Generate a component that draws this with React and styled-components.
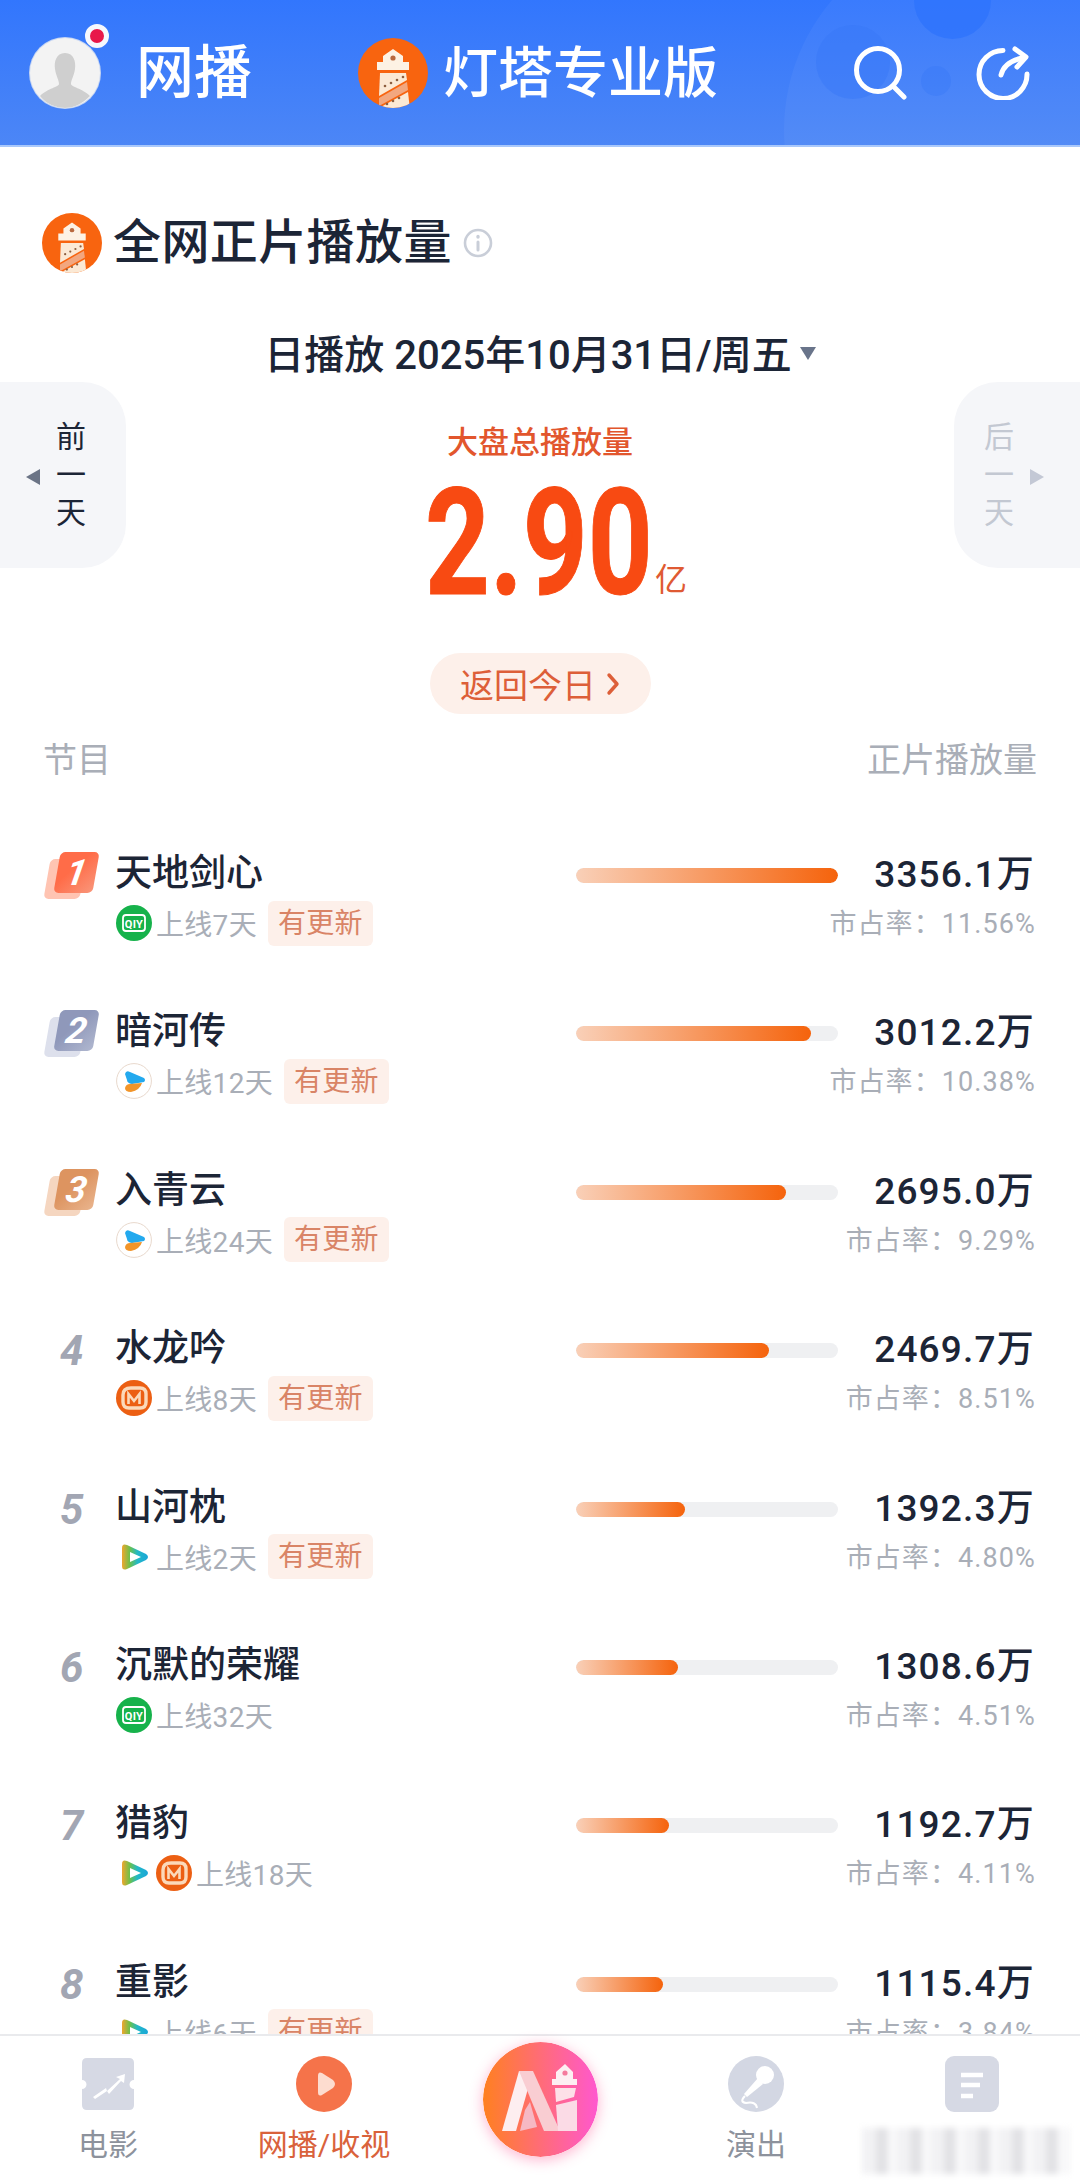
import React from 'react';
import styled, { createGlobalStyle } from 'styled-components';

const GlobalStyle = createGlobalStyle`
  html, body { margin: 0; padding: 0; background: #fff; }
  body { font-family: Roboto, "Noto Sans CJK SC", sans-serif; }
`;

const MAX_PLAY = 3356.1;

const shows = [
  { rank: 1, name: '天地剑心', platforms: ['iqiyi'], days: 7, fresh: true, plays: 3356.1, share: '11.56%' },
  { rank: 2, name: '暗河传', platforms: ['youku'], days: 12, fresh: true, plays: 3012.2, share: '10.38%' },
  { rank: 3, name: '入青云', platforms: ['youku'], days: 24, fresh: true, plays: 2695.0, share: '9.29%' },
  { rank: 4, name: '水龙吟', platforms: ['mgtv'], days: 8, fresh: true, plays: 2469.7, share: '8.51%' },
  { rank: 5, name: '山河枕', platforms: ['tencent'], days: 2, fresh: true, plays: 1392.3, share: '4.80%' },
  { rank: 6, name: '沉默的荣耀', platforms: ['iqiyi'], days: 32, fresh: false, plays: 1308.6, share: '4.51%' },
  { rank: 7, name: '猎豹', platforms: ['tencent', 'mgtv'], days: 18, fresh: false, plays: 1192.7, share: '4.11%' },
  { rank: 8, name: '重影', platforms: ['tencent'], days: 6, fresh: true, plays: 1115.4, share: '3.84%' },
];

const badgeColors = {
  1: ['#ffc4b2', '#ff6c48', '#f9967a'],
  2: ['#dde0ec', '#8f98ba', '#b0b7cf'],
  3: ['#f5d6c0', '#dd9460', '#e9b48d'],
};

const Page = styled.div`
  width: 1080px;
  height: 2184px;
  display: flex;
  flex-direction: column;
  overflow: hidden;
  background: #fff;
  color: #1c2536;
`;

const Header = styled.header`
  position: relative;
  flex: none;
  height: 147px;
  padding: 0 50px 0 30px;
  box-sizing: border-box;
  display: flex;
  align-items: center;
  overflow: hidden;
  background: linear-gradient(180deg, #3276fd 0%, #4c86f6 100%);
  border-bottom: 2px solid #a9c8fb;
`;

const HeaderBlob = styled.div`
  position: absolute;
  left: ${p => p.$x}px;
  top: ${p => p.$y}px;
  width: ${p => p.$d}px;
  height: ${p => p.$d}px;
  border-radius: 50%;
  background: ${p => p.$color};
`;

const AvatarWrap = styled.div`
  position: relative;
  width: 70px;
  height: 70px;
  flex: none;
`;

const Avatar = styled.div`
  width: 70px;
  height: 70px;
  border-radius: 50%;
  overflow: hidden;
  background: #f3f3f3;
  box-shadow: 0 0 0 1px #c7d6f2;
`;

const RedDot = styled.span`
  position: absolute;
  left: 55px;
  top: -14px;
  width: 14px;
  height: 14px;
  border-radius: 50%;
  background: #e8184a;
  border: 5px solid #f6f8fd;
`;

const Channel = styled.div`
  position: relative;
  margin-left: 36px;
  width: 222px;
  font-size: 58px;
  line-height: 70px;
  color: #fff;
  font-weight: 500;
  flex: none;
`;

const Brand = styled.div`
  position: relative;
  display: flex;
  align-items: center;
  gap: 15px;
  flex: none;
`;

const BrandName = styled.span`
  font-size: 55px;
  line-height: 70px;
  color: #fff;
  font-weight: 500;
`;

const HeaderIcons = styled.div`
  position: relative;
  margin-left: auto;
  display: flex;
  align-items: center;
  gap: 68px;
`;

const Main = styled.main`
  flex: 1;
  min-height: 0;
  overflow: hidden;
`;

const TitleRow = styled.div`
  display: flex;
  align-items: center;
  padding: 66px 42px 0;
  height: 60px;
`;

const Title = styled.h1`
  margin: 0 11px 0 11px;
  font-size: 48px;
  line-height: 60px;
  font-weight: 500;
  letter-spacing: 0.4px;
  white-space: nowrap;
`;

const DateRow = styled.div`
  margin-top: 56px;
  display: flex;
  justify-content: center;
  align-items: center;
  gap: 8px;
  height: 46px;
  font-size: 40px;
  font-weight: 500;
`;

const DateCaret = styled.span`
  width: 0;
  height: 0;
  margin-top: 2px;
  border-left: 8px solid transparent;
  border-right: 8px solid transparent;
  border-top: 13px solid #69748a;
`;

const Hero = styled.section`
  margin-top: 7px;
  display: flex;
  justify-content: space-between;
  align-items: flex-start;
`;

const DayButton = styled.div`
  width: 126px;
  height: 186px;
  box-sizing: border-box;
  display: flex;
  flex-direction: ${p => (p.$next ? 'row-reverse' : 'row')};
  align-items: center;
  justify-content: flex-start;
  padding: ${p => (p.$next ? '0 36px 0 0' : '0 0 0 26px')};
  background: #f5f6f9;
  border-radius: ${p => (p.$next ? '44px 0 0 44px' : '0 44px 44px 0')};
  color: ${p => (p.$next ? '#c3c8d2' : '#1c2536')};
`;

const DayArrow = styled.span`
  width: 0;
  height: 0;
  margin-top: 4px;
  border-top: 8px solid transparent;
  border-bottom: 8px solid transparent;
  ${p => (p.$next
    ? 'border-left: 14px solid #c3c8d5;'
    : 'border-right: 14px solid #6b7486;')}
`;

const DayText = styled.div`
  display: flex;
  flex-direction: column;
  align-items: center;
  margin: ${p => (p.$next ? '0 16px 0 0' : '0 0 0 16px')};
  font-size: 30px;
  line-height: 38px;
`;

const Total = styled.div`
  display: flex;
  flex-direction: column;
  align-items: center;
  padding-top: 40px;
`;

const TotalLabel = styled.div`
  font-size: 31px;
  line-height: 42px;
  font-weight: 500;
  color: #e2562d;
`;

const TotalValue = styled.div`
  position: relative;
  width: 222px;
  height: 140px;
  margin-top: 10px;
  margin-left: -8px;
`;

const TotalNumber = styled.span`
  position: absolute;
  left: 0;
  top: 0;
  font-size: 148px;
  line-height: 140px;
  font-weight: 700;
  color: #f84a12;
  transform: scaleX(0.765);
  transform-origin: left center;
  -webkit-text-stroke: 1px #f84a12;
  white-space: nowrap;
`;

const TotalUnit = styled.span`
  position: absolute;
  left: 230px;
  top: 86px;
  font-size: 32px;
  line-height: 40px;
  color: #df5a33;
  white-space: nowrap;
`;

const BackRow = styled.div`
  margin-top: 39px;
  display: flex;
  justify-content: center;
`;

const BackPill = styled.div`
  width: 221px;
  height: 61px;
  display: flex;
  align-items: center;
  justify-content: center;
  gap: 10px;
  border-radius: 31px;
  background: #fdf0ea;
  color: #dd5f39;
  font-size: 34px;
`;

const ListHead = styled.div`
  margin-top: 24px;
  padding: 0 43px;
  display: flex;
  justify-content: space-between;
  font-size: 34px;
  line-height: 44px;
  color: #a9aeb7;
`;

const List = styled.div`
  margin-top: 51px;
`;

const Row = styled.article`
  height: 158.4px;
  box-sizing: border-box;
  padding: 0 44px;
  display: flex;
  align-items: flex-start;
`;

const Rank = styled.div`
  position: relative;
  width: 72px;
  height: 50px;
  flex: none;
  margin-top: 18px;
`;

const BadgeBack = styled.span`
  position: absolute;
  left: 3px;
  top: 8px;
  width: 36px;
  height: 40px;
  border-radius: 5px;
  transform: skewX(-10deg);
  background: ${p => p.$color};
`;

const BadgeFront = styled.span`
  position: absolute;
  left: 13px;
  top: 1px;
  width: 39px;
  height: 41px;
  border-radius: 5px;
  transform: skewX(-10deg);
  background: linear-gradient(135deg, ${p => p.$color} 40%, ${p => p.$end} 100%);
  display: flex;
  align-items: center;
  justify-content: center;
  color: #fff;
  font-size: 36px;
  font-weight: 700;
  font-style: italic;
`;

const RankPlain = styled.span`
  position: absolute;
  left: 16px;
  top: 0;
  font-size: 42px;
  line-height: 50px;
  font-weight: 700;
  font-style: italic;
  color: #a2a6b3;
`;

const ShowInfo = styled.div`
  flex: 1;
  min-width: 0;
  display: flex;
  flex-direction: column;
`;

const ShowName = styled.div`
  margin-top: 19px;
  font-size: 37px;
  line-height: 44px;
  font-weight: 500;
  margin-left: -1px;
`;

const MetaRow = styled.div`
  margin-top: 4px;
  display: flex;
  align-items: center;
  height: 46px;
  color: #a9aeb7;
  font-size: 28px;
  letter-spacing: 0.3px;
`;

const PlatformIcon = styled.svg`
  width: 36px;
  height: 36px;
  flex: none;
  margin-right: 4px;
`;

const Fresh = styled.span`
  margin-left: 11px;
  padding: 0 10px;
  height: 45px;
  line-height: 45px;
  border-radius: 6px;
  background: #fdf0ea;
  color: #d98466;
  font-size: 28px;
`;

const BarTrack = styled.div`
  flex: none;
  width: 262px;
  height: 15px;
  margin-top: 35px;
  border-radius: 8px;
  background: #eff0f2;
  overflow: hidden;
`;

const BarFill = styled.div`
  height: 100%;
  border-radius: 8px;
  background: linear-gradient(90deg, #f9d0b8 0%, #f5630c 100%);
`;

const Stats = styled.div`
  flex: none;
  width: 198px;
  display: flex;
  flex-direction: column;
  align-items: flex-end;
`;

const Plays = styled.div`
  margin-top: 20px;
  margin-right: 1px;
  font-size: 37px;
  line-height: 44px;
  font-weight: 500;
  letter-spacing: 1.2px;
  white-space: nowrap;
`;

const Share = styled.div`
  margin-top: 4px;
  font-size: 27px;
  line-height: 46px;
  color: #a9aeb7;
  letter-spacing: 1.1px;
  white-space: nowrap;
`;

const TabBar = styled.nav`
  position: relative;
  flex: none;
  height: 150px;
  box-sizing: border-box;
  border-top: 2px solid #e9eaed;
  background: #fff;
  display: grid;
  grid-template-columns: repeat(5, 216px);
`;

const Tab = styled.div`
  display: flex;
  flex-direction: column;
  align-items: center;
  padding-top: 20px;
  font-size: 30px;
  line-height: 36px;
  color: ${p => (p.$active ? '#d9623b' : '#8d929c')};
  svg { width: 56px; height: 56px; margin-bottom: 15px; }
`;

const AiButton = styled.div`
  display: flex;
  justify-content: center;
  padding-top: 6px;
  svg {
    width: 115px;
    height: 115px;
    border-radius: 50%;
    box-shadow: 0 3px 14px rgba(255, 90, 150, 0.45);
  }
`;

const BlurredLabel = styled.div`
  position: absolute;
  left: 862px;
  top: 92px;
  width: 207px;
  height: 46px;
  filter: blur(3px);
  background: repeating-linear-gradient(90deg, #f2f2f4 0 14px, #e2e2e5 14px 26px, #fafafb 26px 34px);
`;

const LighthouseLogo = ({ size }) => (
  <svg width={size} height={size} viewBox="0 0 70 70">
    <defs>
      <clipPath id={`lh-${size}`}><circle cx="35" cy="35" r="35" /></clipPath>
    </defs>
    <circle cx="35" cy="35" r="35" fill="#f8640f" />
    <g clipPath={`url(#lh-${size})`}>
      <path d="M35 11 L45 18 V24 H51 V32 H19 V24 H25 V18 Z" fill="#fdf2e4" />
      <circle cx="35" cy="20" r="2.6" fill="#b9693f" />
      <path d="M22 35 H48 L49 42 L21 58 Z" fill="#fbe9d5" />
      <path d="M21 60 L49 44 L50 52 L21 68 Z" fill="#f2a77f" />
      <path d="M21 70 L50 54 L52 72 H21 Z" fill="#fbe9d5" />
      <circle cx="27" cy="48" r="1.3" fill="#8d5f40" />
      <circle cx="33" cy="45" r="1.3" fill="#8d5f40" />
      <circle cx="39" cy="42" r="1.3" fill="#8d5f40" />
      <circle cx="45" cy="39" r="1.3" fill="#8d5f40" />
      <circle cx="29" cy="66" r="1.3" fill="#8d5f40" />
      <circle cx="35" cy="63" r="1.3" fill="#8d5f40" />
      <circle cx="41" cy="60" r="1.3" fill="#8d5f40" />
    </g>
  </svg>
);

const Platform = ({ type }) => {
  if (type === 'iqiyi') {
    return (
      <PlatformIcon viewBox="0 0 36 36">
        <circle cx="18" cy="18" r="18" fill="#16b24b" />
        <rect x="7" y="10" width="22" height="16" rx="3" fill="none" stroke="#fff" strokeWidth="1.8" />
        <text x="18" y="22.5" textAnchor="middle" fontSize="11" fontWeight="700" fill="#fff" fontFamily="Roboto, sans-serif">QIY</text>
      </PlatformIcon>
    );
  }
  if (type === 'youku') {
    return (
      <PlatformIcon viewBox="0 0 36 36">
        <circle cx="18" cy="18" r="17.4" fill="#fff" stroke="#e8d8cc" strokeWidth="1" />
        <path d="M9 11 Q10 7 14 9 L28 15 Q30 17 28 19 L16 21 Q11 20 11 17 Z" fill="#23a9ee" />
        <path d="M9 25 Q10 21 14 21 L26 20 Q24 27 15 29 Q9 29 9 25 Z" fill="#f2952a" />
      </PlatformIcon>
    );
  }
  if (type === 'mgtv') {
    return (
      <PlatformIcon viewBox="0 0 36 36">
        <circle cx="18" cy="18" r="18" fill="#ec5f13" />
        <path d="M15 8 H24 Q30 8 30 14 V22 Q30 28 24 28 H13 Q7 28 7 22 V15 Q7 8 15 8 Z" fill="none" stroke="#fbd9ba" strokeWidth="3.4" />
        <path d="M12.5 24 V14 L18 21 L23.5 14 V24" fill="none" stroke="#fbd9ba" strokeWidth="2.6" />
      </PlatformIcon>
    );
  }
  return (
    <PlatformIcon viewBox="0 0 36 36">
      <defs>
        <linearGradient id="tencentGrad" x1="0" x2="1" y1="0" y2="0">
          <stop offset="0" stopColor="#f0a52c" />
          <stop offset="0.3" stopColor="#6cc04a" />
          <stop offset="0.6" stopColor="#22b8c8" />
          <stop offset="1" stopColor="#1aa6d8" />
        </linearGradient>
      </defs>
      <path d="M6 9 Q6 4 11 6 L30 15 Q34 18 30 21 L11 30 Q6 32 6 27 Z" fill="url(#tencentGrad)" />
      <path d="M14 13 L25 18 L14 23 Z" fill="#fff" />
    </PlatformIcon>
  );
};

const RankMark = ({ rank }) => {
  const colors = badgeColors[rank];
  return (
    <Rank>
      {colors ? (
        <>
          <BadgeBack $color={colors[0]} />
          <BadgeFront $color={colors[1]} $end={colors[2]}>{rank}</BadgeFront>
        </>
      ) : (
        <RankPlain>{rank}</RankPlain>
      )}
    </Rank>
  );
};

function ShowRow({ show }) {
  return (
    <Row>
      <RankMark rank={show.rank} />
      <ShowInfo>
        <ShowName>{show.name}</ShowName>
        <MetaRow>
          {show.platforms.map(p => <Platform key={p} type={p} />)}
          <span>上线{show.days}天</span>
          {show.fresh && <Fresh>有更新</Fresh>}
        </MetaRow>
      </ShowInfo>
      <BarTrack>
        <BarFill style={{ width: `${(show.plays / MAX_PLAY) * 100}%` }} />
      </BarTrack>
      <Stats>
        <Plays>{show.plays.toFixed(1)}万</Plays>
        <Share>市占率：{show.share}</Share>
      </Stats>
    </Row>
  );
}

export default function App() {
  return (
    <>
      <GlobalStyle />
      <Page>
        <Header>
          <HeaderBlob $x={784} $y={-70} $d={400} $color="rgba(255,255,255,0.045)" />
          <HeaderBlob $x={914} $y={-38} $d={77} $color="rgba(45,115,252,0.75)" />
          <HeaderBlob $x={816} $y={25} $d={74} $color="rgba(55,120,248,0.5)" />
          <HeaderBlob $x={921} $y={66} $d={30} $color="rgba(55,120,248,0.4)" />
          <AvatarWrap>
            <Avatar>
              <svg width="70" height="70" viewBox="0 0 70 70">
                <path d="M35 15 C44 15 46 24 45 31 C44 38 41 42 41 46 C41 49 52 50 60 58 C52 66 44 70 35 70 C26 70 16 66 10 58 C18 50 29 49 29 46 C29 42 26 38 25 31 C24 24 26 15 35 15 Z" fill="#cfcfcf" />
              </svg>
            </Avatar>
            <RedDot />
          </AvatarWrap>
          <Channel>网播</Channel>
          <Brand>
            <LighthouseLogo size={70} />
            <BrandName>灯塔专业版</BrandName>
          </Brand>
          <HeaderIcons>
            <svg width="54" height="54" viewBox="0 0 54 54" fill="none" stroke="#fff" strokeWidth="5" strokeLinecap="round">
              <circle cx="24" cy="24" r="21.5" />
              <path d="M39 40 L50 51" />
            </svg>
            <svg width="54" height="54" viewBox="0 0 54 54" fill="none" stroke="#fff" strokeWidth="5" strokeLinecap="round" strokeLinejoin="round">
              <path d="M27 4.5 A24 24 0 1 0 51 28" />
              <path d="M25 29 Q28 16 46 12" />
              <path d="M39 3 L50 11 L41 21" />
            </svg>
          </HeaderIcons>
        </Header>

        <Main>
          <TitleRow>
            <LighthouseLogo size={60} />
            <Title>全网正片播放量</Title>
            <svg width="30" height="30" viewBox="0 0 30 30" fill="none" stroke="#c9ced8" strokeWidth="2.6" strokeLinecap="round">
              <circle cx="15" cy="15" r="13" />
              <path d="M15 14 V22" strokeWidth="3" />
              <path d="M15 8.5 V9" strokeWidth="3.4" />
            </svg>
          </TitleRow>

          <DateRow>
            <span>日播放 2025年10月31日/周五</span>
            <DateCaret />
          </DateRow>

          <Hero>
            <DayButton>
              <DayArrow />
              <DayText><span>前</span><span>一</span><span>天</span></DayText>
            </DayButton>
            <Total>
              <TotalLabel>大盘总播放量</TotalLabel>
              <TotalValue>
                <TotalNumber>2.90</TotalNumber>
                <TotalUnit>亿</TotalUnit>
              </TotalValue>
            </Total>
            <DayButton $next>
              <DayArrow $next />
              <DayText $next><span>后</span><span>一</span><span>天</span></DayText>
            </DayButton>
          </Hero>

          <BackRow>
            <BackPill>
              <span>返回今日</span>
              <svg width="14" height="24" viewBox="0 0 14 24" fill="none" stroke="#dd5f39" strokeWidth="3.4" strokeLinecap="round" strokeLinejoin="round">
                <path d="M3 3 L11 12 L3 21" />
              </svg>
            </BackPill>
          </BackRow>

          <ListHead>
            <span>节目</span>
            <span>正片播放量</span>
          </ListHead>

          <List>
            {shows.map(show => <ShowRow key={show.rank} show={show} />)}
          </List>
        </Main>

        <TabBar>
          <Tab>
            <svg viewBox="0 0 56 56">
              <path d="M7 2 H49 Q54 2 54 7 V24 A4.5 4.5 0 0 0 54 33 V49 Q54 54 49 54 H7 Q2 54 2 49 V33 A4.5 4.5 0 0 0 2 24 V7 Q2 2 7 2 Z" fill="#d6d9e4" />
              <path d="M13 41 L26 32 L27 35 L40 23 L36 21 L45 18 L44 27 L41 25 L29 38 L27 35 L15 43 Z" fill="#fff" />
            </svg>
            <span>电影</span>
          </Tab>
          <Tab $active>
            <svg viewBox="0 0 56 56">
              <circle cx="28" cy="28" r="28" fill="#f5734a" />
              <path d="M22 20 Q22 15 26 17 L37 24 Q41 28 37 32 L26 39 Q22 41 22 36 Z" fill="#fddccf" />
            </svg>
            <span>网播/收视</span>
          </Tab>
          <AiButton>
            <svg viewBox="0 0 115 115">
              <defs>
                <linearGradient id="aiGrad" x1="0" x2="1" y1="0" y2="0">
                  <stop offset="0" stopColor="#ff8020" />
                  <stop offset="1" stopColor="#ff58cf" />
                </linearGradient>
              </defs>
              <circle cx="57.5" cy="57.5" r="57.5" fill="url(#aiGrad)" />
              <path d="M36 29 H50 L33 89 H19 Z" fill="#fdeef0" />
              <path d="M36 29 H50 L77 89 H61 Z" fill="#f9cdd2" />
              <path d="M42 68 L47 60 L54 85 L37 89 Z" fill="#f6b8c4" />
              <path d="M73 30 L82 22 L90 30 V37 H94 V43 H69 V37 H73 Z" fill="#fdeff2" />
              <circle cx="82" cy="31" r="2.6" fill="#f57a9d" />
              <path d="M72 46 H93 L91 55 L73 60 Z" fill="#fde0e8" />
              <path d="M73 63 L94 58 V89 H75 Z" fill="#fbdbe6" />
            </svg>
          </AiButton>
          <Tab>
            <svg viewBox="0 0 56 56">
              <circle cx="28" cy="28" r="28" fill="#d3d7e3" />
              <circle cx="37" cy="19" r="9" fill="#fff" />
              <path d="M30 22 L35 28 L19 41 L16 38 Z" fill="#fff" />
              <path d="M17 40 Q11 46 18 47 Q28 45 29 52" fill="none" stroke="#fff" strokeWidth="2" />
            </svg>
            <span>演出</span>
          </Tab>
          <Tab>
            <svg viewBox="0 0 56 56">
              <rect x="1" y="0" width="54" height="56" rx="9" fill="#d6d9e4" />
              <path d="M17 19 H39 M17 29 H36 M17 40 H29" stroke="#fff" strokeWidth="4.5" />
            </svg>
          </Tab>
          <BlurredLabel />
        </TabBar>
      </Page>
    </>
  );
}
